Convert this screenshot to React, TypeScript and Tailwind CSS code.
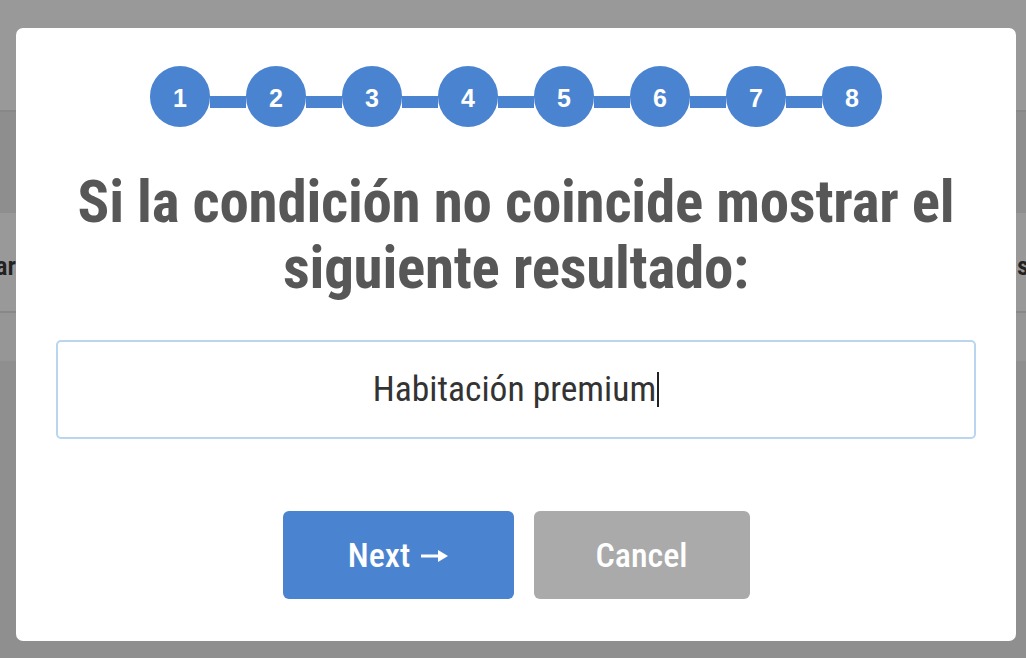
import { Fragment } from "react";

const steps = [1, 2, 3, 4, 5, 6, 7, 8];

const condensed = "font-['Roboto_Condensed','Roboto',sans-serif] [font-stretch:condensed]";

function Stepper() {
  return (
    <div className="flex items-start justify-center">
      {steps.map((n, i) => (
        <Fragment key={n}>
          {i > 0 && <div className="mt-[30px] h-3 w-9 bg-[#4a84d0]" />}
          <div className="flex h-[61px] w-[60px] items-center justify-center rounded-full bg-[#4a84d0] pt-[5px] font-['Liberation_Sans',Arial,sans-serif] text-[25px] font-bold text-white">
            {n}
          </div>
        </Fragment>
      ))}
    </div>
  );
}

function ArrowRight() {
  return (
    <svg width="27" height="16" viewBox="0 0 27 16" className="ml-[11px] mt-[2px]">
      <path d="M0 8h19" stroke="currentColor" strokeWidth="3" />
      <path d="M17 2l10 6-10 6z" fill="currentColor" />
    </svg>
  );
}

function Backdrop() {
  return (
    <div className={`absolute inset-0 flex flex-col bg-white text-[26px] font-semibold text-[#3a3a3a] ${condensed}`}>
      <div className="h-[112px] border-b-2 border-[#e3e3e3]" />
      <div className="h-[101px] bg-[#ededed]" />
      <div className="flex h-[100px] items-center justify-between border-b-2 border-[#e3e3e3] pt-2">
        <div className="flex w-[16px] justify-end overflow-hidden whitespace-nowrap">Mostrar</div>
        <div className="w-[9px] overflow-hidden whitespace-nowrap">s</div>
      </div>
      <div className="h-[48px] bg-[#fbfbfb]" />
      <div className="flex-1 bg-[#eeeeee]" />
      <div className="absolute inset-0 bg-black/40" />
    </div>
  );
}

export default function App() {
  return (
    <div className="relative h-[658px] w-[1026px] overflow-hidden">
      <Backdrop />
      <div className="relative flex h-full items-start pl-4 pt-[28px]">
        <div className="flex w-[1000px] flex-col items-center rounded-[7px] bg-white px-10 pb-[42px] pt-[38px]">
          <Stepper />
          <h1
            className={`mt-[42px] text-center text-[59px] font-bold leading-[66px] tracking-[-0.25px] text-[#575757] ${condensed}`}
          >
            Si la condición no coincide mostrar el
            <br />
            siguiente resultado:
          </h1>
          <div
            className={`mt-[39px] flex h-[99px] w-full items-center justify-center rounded-[5px] border-2 border-[#b9d6ee] text-[35.5px] text-[#333333] ${condensed}`}
          >
            <span>Habitación premium</span>
            <span className="ml-[1px] h-[35px] w-[2px] bg-[#222]" />
          </div>
          <div className={`mt-[72px] flex gap-5 text-[34px] font-medium text-white ${condensed}`}>
            <button className="flex h-[88px] w-[231px] items-center justify-center rounded-[6px] bg-[#4a84d0]">
              Next
              <ArrowRight />
            </button>
            <button className="flex h-[88px] w-[216px] items-center justify-center rounded-[6px] bg-[#aaaaaa]">
              Cancel
            </button>
          </div>
        </div>
      </div>
    </div>
  );
}
